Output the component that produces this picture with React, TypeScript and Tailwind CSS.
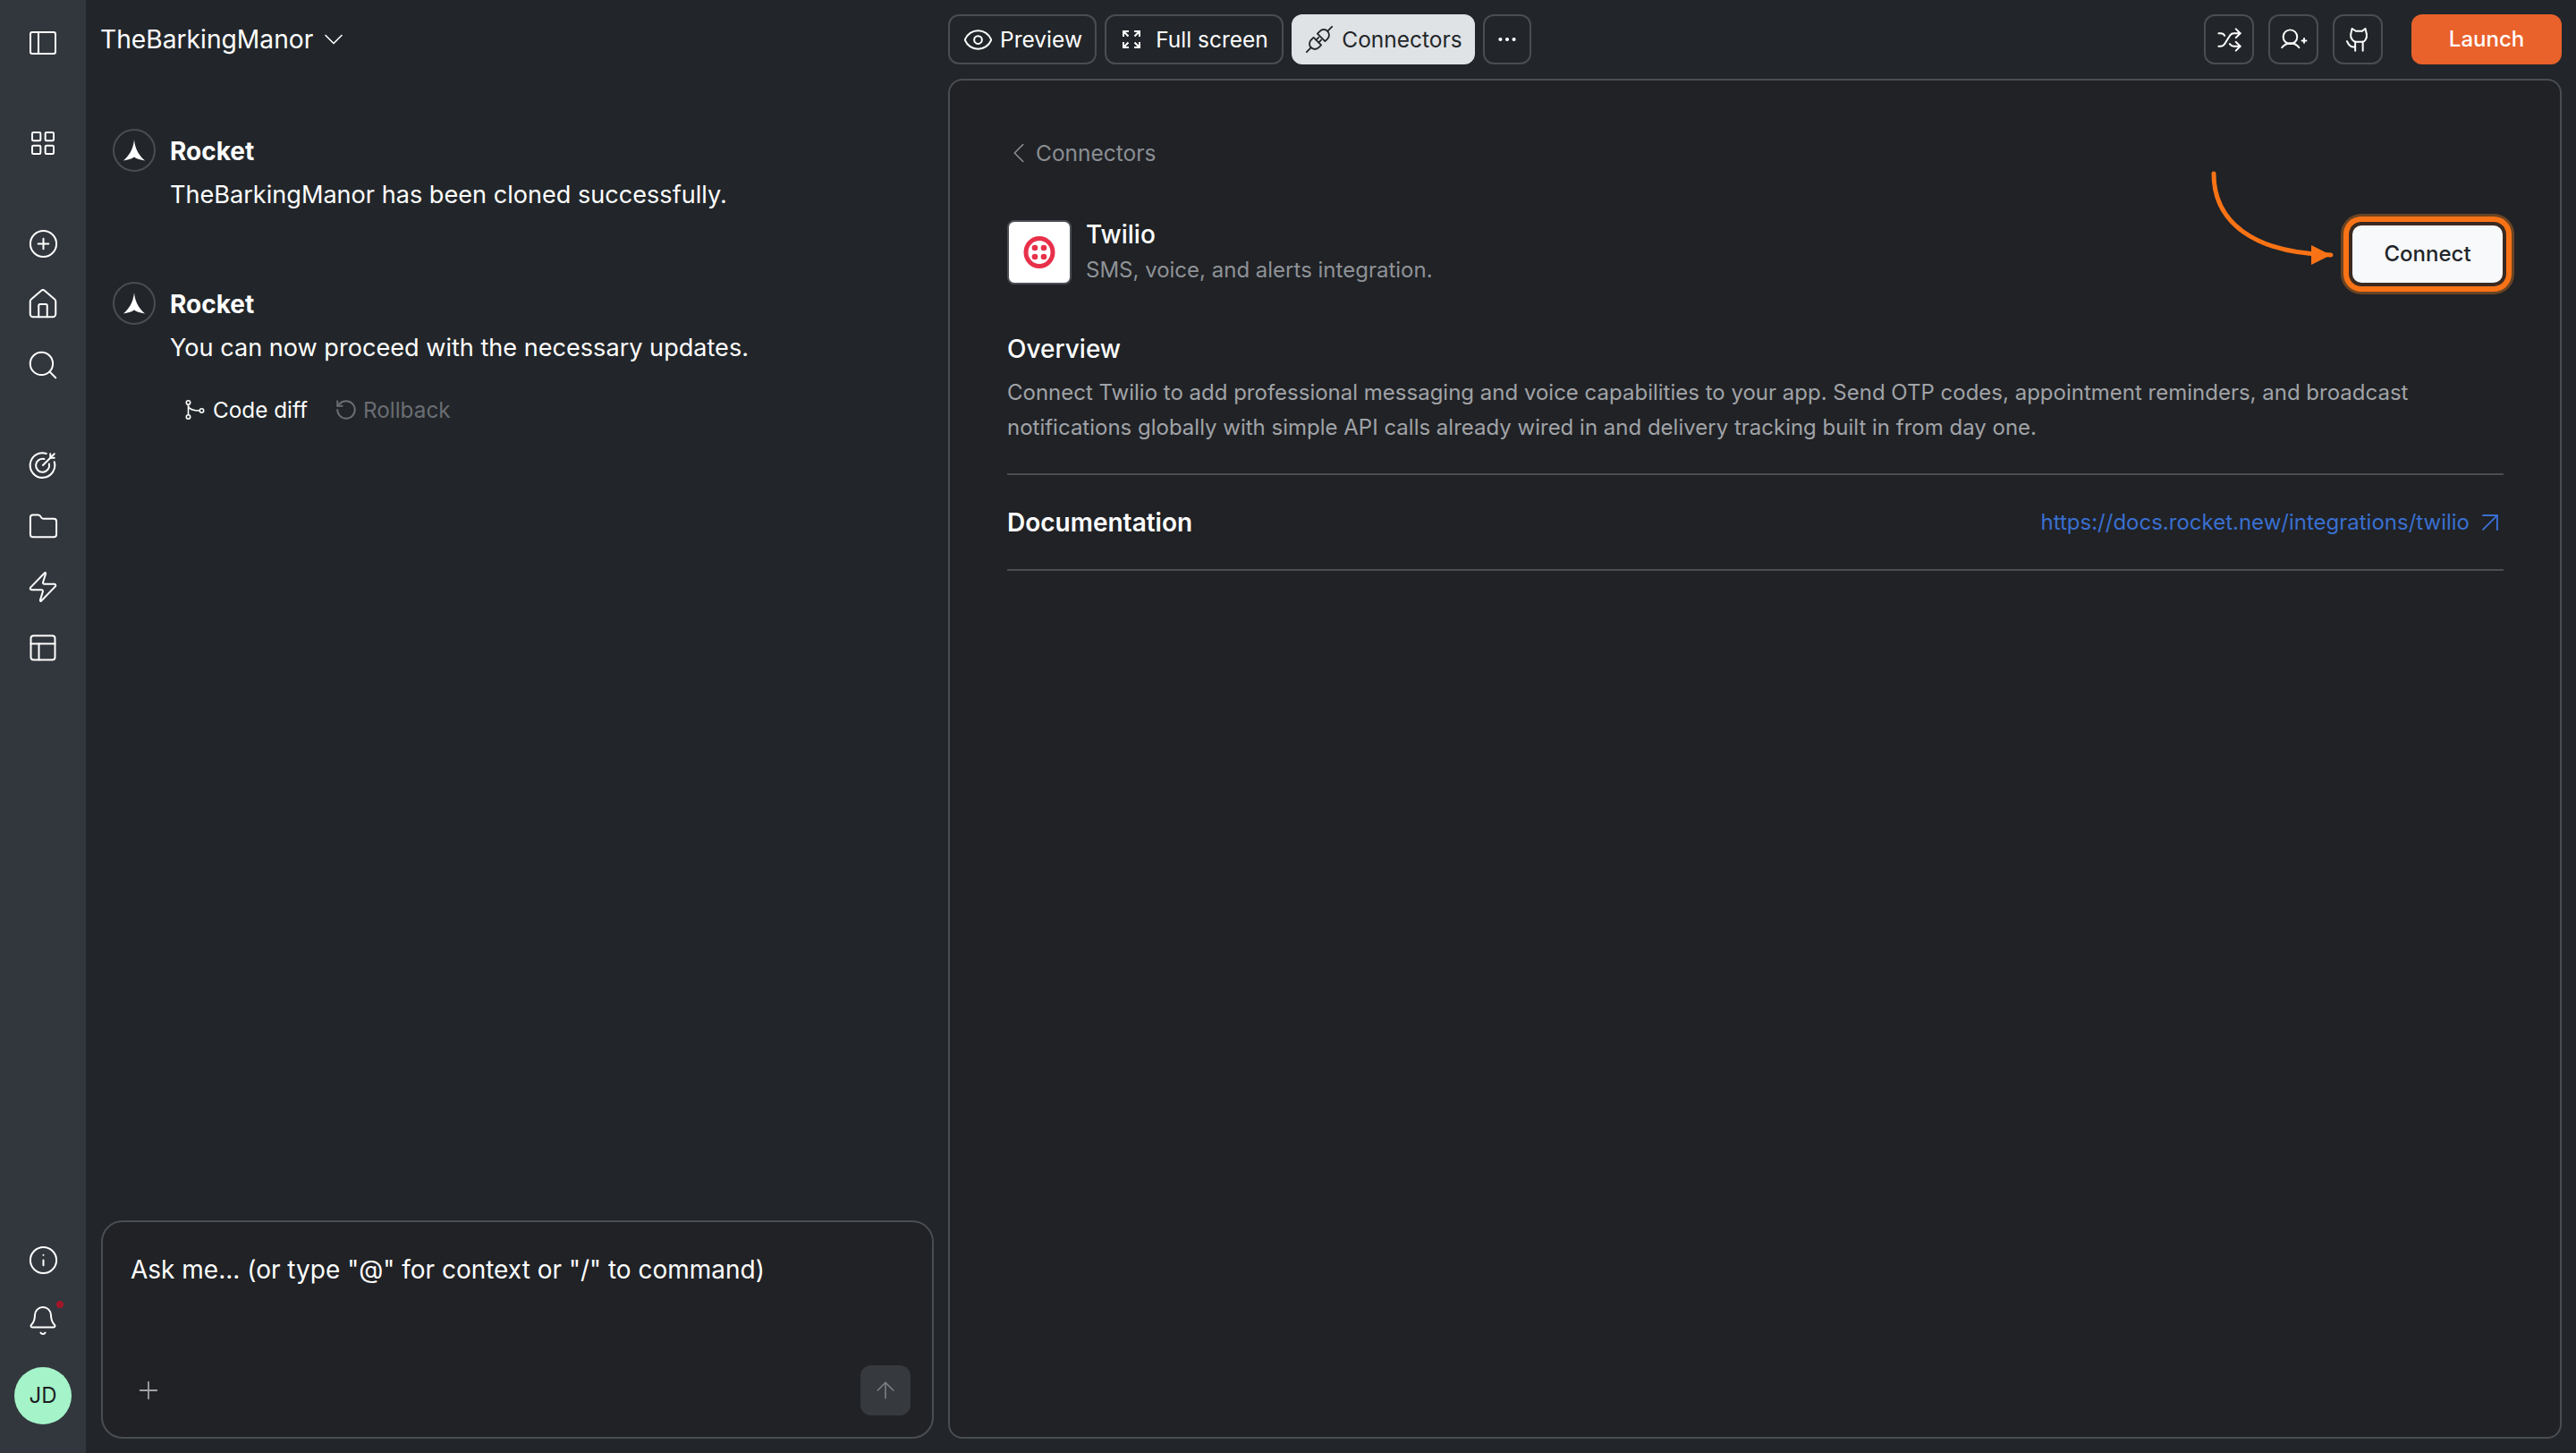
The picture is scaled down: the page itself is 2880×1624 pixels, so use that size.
import React from "react";
import { LayoutGrid, CirclePlus, House, Search, Folder, Zap, PanelsTopLeft, Info, Bell, ChevronDown, ChevronLeft, Eye, Ellipsis, Shuffle, Plus, ArrowUp, ArrowUpRight, RotateCcw } from "lucide-react";

function RailIcon({ children }: { children: React.ReactNode }) {
  return <div className="flex h-[68px] w-full items-center justify-center text-white">{children}</div>;
}

function TargetIcon() {
  return (
    <svg width="36" height="36" viewBox="0 0 24 24" fill="none" stroke="currentColor" strokeWidth="1.35" strokeLinecap="round">
      <path d="M20.5 9.5A9.2 9.2 0 1 1 14.5 3.3" />
      <path d="M16.6 11a5 5 0 1 1-3.6-3.7" />
      <path d="M12 12 20.5 3.5" />
      <path d="M17.5 3.5v3h3" />
    </svg>
  );
}

function RocketMark() {
  return (
    <svg width="24" height="24" viewBox="0 0 24 24" fill="white">
      <path d="M12 0C12.800 8 15.500 16 24 23.500C19 22.500 15 21.800 12 19.500C9 21.800 5 22.500 0 23.500C8.500 16 11.200 8 12 0Z" />
    </svg>
  );
}

function Message({ text, children }: { text: string; children?: React.ReactNode }) {
  return (
    <div className="flex items-start gap-4">
      <div className="flex h-12 w-12 shrink-0 items-center justify-center rounded-full border-2 border-[#4a4d52]">
        <RocketMark />
      </div>
      <div className="min-w-0">
        <div className="mt-[8px] text-[28px] leading-[34px] font-bold text-white">Rocket</div>
        <div className="mt-[15px] text-[27.100px] leading-[34px] text-white">{text}</div>
        {children}
      </div>
    </div>
  );
}

function TopButton({ children, active, className }: { children: React.ReactNode; active?: boolean; className?: string }) {
  return (
    <div
      className={
        "flex h-14 items-center justify-center rounded-[12px] border-2 text-[24.500px] " +
        (active ? "border-[#e0e3e6] bg-[#e0e3e6] text-[#22262a] " : "border-[#4a4d52] text-white ") +
        (className ?? "")
      }
    >
      {children}
    </div>
  );
}

export default function App() {
  return (
    <div className="flex h-[1624px] w-[2880px] overflow-hidden bg-[#22262a] font-[family-name:Inter] text-white">
      <aside className="flex w-24 shrink-0 flex-col bg-[#32373d] pt-[14px] pb-8">
        <RailIcon>
          <svg width="30" height="26" viewBox="0 0 30 26" fill="none" stroke="currentColor" strokeWidth="2">
            <rect x="1" y="1" width="28" height="24" rx="2" />
            <path d="M10 1v24" />
          </svg>
        </RailIcon>
        <div className="mt-11">
          <RailIcon><LayoutGrid size={32} strokeWidth={2} absoluteStrokeWidth /></RailIcon>
        </div>
        <div className="mt-11">
          <RailIcon><CirclePlus size={35} strokeWidth={2} absoluteStrokeWidth /></RailIcon>
          <RailIcon><House size={38} strokeWidth={2} absoluteStrokeWidth /></RailIcon>
          <RailIcon><Search size={38} strokeWidth={2} absoluteStrokeWidth /></RailIcon>
        </div>
        <div className="mt-11">
          <RailIcon><TargetIcon /></RailIcon>
          <RailIcon><Folder size={35} strokeWidth={2} absoluteStrokeWidth /></RailIcon>
          <RailIcon><Zap size={38} strokeWidth={2} absoluteStrokeWidth /></RailIcon>
          <RailIcon><PanelsTopLeft size={36} strokeWidth={2} absoluteStrokeWidth /></RailIcon>
        </div>
        <div className="mt-auto">
          <RailIcon><Info size={35} strokeWidth={2} absoluteStrokeWidth /></RailIcon>
          <RailIcon>
            <div className="relative">
              <Bell size={36} strokeWidth={2} absoluteStrokeWidth />
              <span className="absolute -top-[4px] -right-[5px] h-2 w-2 rounded-full bg-[#a3162a]" />
            </div>
          </RailIcon>
        </div>
        <div className="mx-auto mt-[18px] flex h-16 w-16 items-center justify-center rounded-full bg-[#a5f3c9] text-[24px] text-[#1c1f22]">JD</div>
      </aside>

      <section className="flex w-[964px] shrink-0 flex-col pr-4 pb-4 pl-[17px]">
        <header className="-ml-px flex h-[88px] shrink-0 items-center gap-[5px]">
          <span className="text-[28.200px] leading-none">TheBarkingManor</span>
          <ChevronDown size={36} strokeWidth={1.600} absoluteStrokeWidth />
        </header>
        <div className="flex flex-1 flex-col gap-20 pt-14 pl-[13px]">
          <Message text="TheBarkingManor has been cloned successfully." />
          <Message text="You can now proceed with the necessary updates.">
            <div className="mt-9 flex items-center pl-[17px] text-[24.300px] leading-8">
              <svg width="22" height="22" viewBox="0 0 22 22" fill="none" stroke="currentColor" strokeWidth="1.600">
                <circle cx="3.500" cy="3" r="2.200" />
                <circle cx="3.500" cy="19" r="2.200" />
                <circle cx="18.500" cy="12" r="2.200" />
                <path d="M3.500 5.200v11.600M3.500 7c1 3 5 5 12.800 5" />
              </svg>
              <span className="ml-[9px]">Code diff</span>
              <RotateCcw size={26} strokeWidth={2} absoluteStrokeWidth className="ml-[30px] text-[#6a6d72]" />
              <span className="ml-[6px] text-[#6a6d72]">Rollback</span>
            </div>
          </Message>
        </div>
        <div className="flex h-[244px] shrink-0 flex-col rounded-[24px] border-2 border-[#4a4d52] bg-[#202226] pt-[34px] pr-6 pb-6 pl-[31px]">
          <div className="text-[28px] leading-[38px] text-white">Ask me... (or type "@" for context or "/" to command)</div>
          <div className="mt-auto flex items-center justify-between">
            <Plus size={32} strokeWidth={1.800} absoluteStrokeWidth className="ml-[4px] text-[#a0a3a7]" />
            <div className="flex h-14 w-14 items-center justify-center rounded-[12px] bg-[#363a3f]">
              <ArrowUp size={30} strokeWidth={1.600} absoluteStrokeWidth className="text-[#7e8186]" />
            </div>
          </div>
        </div>
      </section>

      <section className="flex min-w-0 flex-1 flex-col pr-4 pb-4">
        <header className="flex h-[88px] shrink-0 items-start pt-4">
          <div className="flex gap-[9px]">
            <TopButton className="w-[166px] gap-[7px]"><Eye size={35} strokeWidth={2} absoluteStrokeWidth />Preview</TopButton>
            <TopButton className="w-[200px] gap-[17px] pl-[3px]">
              <svg width="20" height="20" viewBox="0 0 20 20" fill="none" stroke="currentColor" strokeWidth="2">
                <path d="M1 7V1h6M1 1l5.500 5.500M13 1h6v6M19 1l-5.500 5.500M1 13v6h6M1 19l5.500-5.500M19 13v6h-6M19 19l-5.500-5.500" />
              </svg>
              Full screen
            </TopButton>
            <TopButton active className="w-[205px] gap-[8px]">
              <svg width="34" height="34" viewBox="0 0 24 24" fill="none" stroke="currentColor" strokeWidth="1.300" strokeLinecap="round" strokeLinejoin="round">
                <path d="M10.500 7.500 16.500 13.500 18.500 11.500A4.200 4.200 0 0 0 12.500 5.500Z" />
                <path d="M18.500 5.500 22 2" />
                <path d="M7.500 10.500 13.500 16.500 11.500 18.500A4.200 4.200 0 0 1 5.500 12.500Z" />
                <path d="M5.500 18.500 2 22" />
                <path d="M9.500 12.500l2-2M11.500 14.500l2-2" />
              </svg>
              Connectors
            </TopButton>
            <TopButton className="w-[54px]"><Ellipsis size={26} strokeWidth={2} absoluteStrokeWidth /></TopButton>
          </div>
          <div className="ml-auto flex">
            <div className="flex gap-4">
              <TopButton className="w-14"><Shuffle size={29} strokeWidth={2} absoluteStrokeWidth /></TopButton>
              <TopButton className="w-14">
                <svg width="34" height="34" viewBox="0 0 24 24" fill="none" stroke="currentColor" strokeWidth="1.400" strokeLinecap="round">
                  <circle cx="9.500" cy="10" r="5.500" />
                  <path d="M3 18.500c2-2.500 4.500-3.500 6.800-3.500s4.800 1 6.700 3.500" />
                  <path d="M20.500 11.300v3.400M18.800 13h3.400" />
                </svg>
              </TopButton>
              <TopButton className="w-14">
                <svg width="34" height="34" viewBox="0 0 24 24" fill="none" stroke="currentColor" strokeWidth="1.400" strokeLinecap="round" strokeLinejoin="round">
                  <path d="M7.500 3.500 10.500 5.500h5L18 3.500 19 8c.5 3-1.500 6-3.500 6h-5c-2 0-4.500-3-4-6Z" />
                  <path d="M10 14v7M16 14v7M10 18c-3 .5-5-1-6.500-4.500" />
                </svg>
              </TopButton>
            </div>
            <div className="ml-8 flex h-14 w-[168px] items-center justify-center rounded-[12px] bg-[#e9622b] text-[24px] font-medium text-white">Launch</div>
          </div>
        </header>

        <main className="relative flex-1 rounded-[16px] border-2 border-[#4a4d52] bg-[#202226] pt-[59px] pr-[63px] pl-[64px]">
          <div className="flex h-11 items-center text-[24.500px] text-[#8b8e93]">
            <ChevronLeft size={38} strokeWidth={1.600} absoluteStrokeWidth className="-ml-[6px]" />
            Connectors
          </div>
          <div className="mt-[52px] flex items-center gap-4">
            <div className="flex h-[72px] w-[72px] items-center justify-center rounded-[8px] border-2 border-[#4a4d52] bg-white">
              <svg width="36" height="40" viewBox="0 0 36 40">
                <ellipse cx="18" cy="20" rx="15" ry="15.500" fill="none" stroke="#e8304a" strokeWidth="5" />
                <circle cx="13" cy="15" r="3.300" fill="#e8304a" />
                <circle cx="23" cy="15" r="3.300" fill="#e8304a" />
                <circle cx="13" cy="25" r="3.300" fill="#e8304a" />
                <circle cx="23" cy="25" r="3.300" fill="#e8304a" />
              </svg>
            </div>
            <div>
              <div className="text-[28px] leading-[34px] font-medium text-white">Twilio</div>
              <div className="mt-[7px] text-[24px] leading-8 text-[#8f9297]">SMS, voice, and alerts integration.</div>
            </div>
          </div>
          <div className="mt-[54px] text-[28px] leading-9 font-medium text-white">Overview</div>
          <p className="mt-[11px] w-[1600px] text-[24px] leading-[39px] text-[#a0a3a7]">
            Connect Twilio to add professional messaging and voice capabilities to your app. Send OTP codes, appointment reminders, and broadcast notifications globally with simple API calls already wired in and delivery tracking built in from day one.
          </p>
          <div className="mt-[32px] flex h-[109px] items-center justify-between border-y-2 border-[#4a4d52]">
            <span className="text-[28px] font-semibold text-white">Documentation</span>
            <span className="flex items-center gap-1 text-[24px] text-[#3a6fd0]">
              https://docs.rocket.new/integrations/twilio
              <ArrowUpRight size={38} strokeWidth={2} absoluteStrokeWidth className="-mr-1" />
            </span>
          </div>

          <div className="absolute top-[162px] right-[64px] flex h-16 w-[168px] items-center justify-center rounded-[10px] bg-[#f8f9fb] text-[24px] font-medium text-[#22262a] shadow-[0_0_0_4px_#3b2a20,0_0_0_10px_#f97316,0_0_0_13px_#6b4423]">
            Connect
          </div>
          <svg className="absolute top-[98px] left-[1407px]" width="144" height="110" viewBox="0 0 144 110" fill="none">
            <path d="M6 6C6 60 50 95 137 97" stroke="#f97316" strokeWidth="5" strokeLinecap="round" />
            <path d="M115 86 137 97 115 108Z" fill="#f97316" />
          </svg>
        </main>
      </section>
    </div>
  );
}
